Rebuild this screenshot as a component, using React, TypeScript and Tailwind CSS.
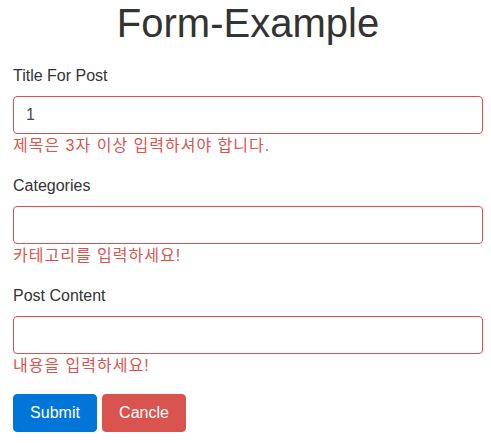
export default function App() {
  const groups = [
    { label: 'Title For Post', value: '1', error: '제목은 3자 이상 입력하셔야 합니다.' },
    { label: 'Categories', value: '', error: '카테고리를 입력하세요!' },
    { label: 'Post Content', value: '', error: '내용을 입력하세요!' },
  ];

  return (
    <div className="min-h-screen bg-white pl-[13px] pr-[8px] font-['Liberation_Sans','Noto_Sans_CJK_KR',sans-serif] text-base leading-6 text-[#333]">
      <h1 className="mb-[18px] text-center text-[40px] leading-[46px] font-normal text-[#333]">
        Form-Example
      </h1>
      <form>
        {groups.map((g) => (
          <div key={g.label} className="mb-4">
            <label className="mb-2 block">{g.label}</label>
            <input
              type="text"
              defaultValue={g.value}
              className="block h-[38px] w-full rounded border border-[#d9534f] bg-white px-3 text-base text-[#464a4c] outline-none"
            />
            <div className="tracking-[1px] text-[#d9534f]">{g.error}</div>
          </div>
        ))}
        <div className="flex gap-[5px]">
          <button
            type="button"
            className="h-[38px] w-[84px] rounded border border-[#0275d8] bg-[#0275d8] text-base text-white"
          >
            Submit
          </button>
          <button
            type="button"
            className="h-[38px] w-[84px] rounded border border-[#d9534f] bg-[#d9534f] text-base text-white"
          >
            Cancle
          </button>
        </div>
      </form>
    </div>
  );
}
